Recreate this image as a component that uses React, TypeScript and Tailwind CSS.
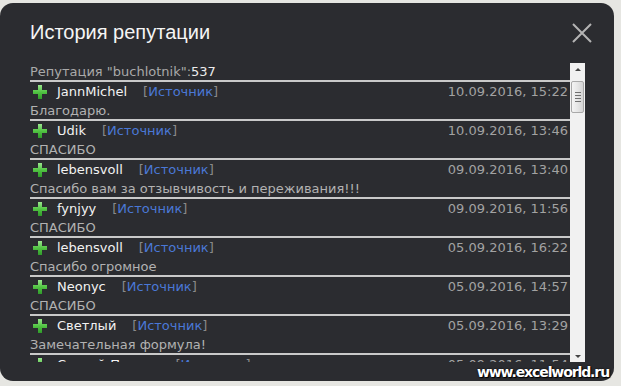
const entries = [
  { user: "JannMichel", date: "10.09.2016, 15:22", text: "Благодарю." },
  { user: "Udik", date: "10.09.2016, 13:46", text: "СПАСИБО" },
  { user: "lebensvoll", date: "09.09.2016, 13:40", text: "Спасибо вам за отзывчивость и переживания!!!" },
  { user: "fynjyy", date: "09.09.2016, 11:56", text: "СПАСИБО" },
  { user: "lebensvoll", date: "05.09.2016, 16:22", text: "Спасибо огромное" },
  { user: "Neonyc", date: "05.09.2016, 14:57", text: "СПАСИБО" },
  { user: "Светлый", date: "05.09.2016, 13:29", text: "Замечательная формула!" },
  { user: "Сергей-Петров", date: "05.09.2016, 11:54", text: "Спасибо" },
];

function PlusIcon() {
  return (
    <svg width="14" height="14" viewBox="0 0 14 14" className="shrink-0">
      <defs>
        <linearGradient id="plusFill" x1="0" y1="0" x2="0" y2="1">
          <stop offset="0" stopColor="#9be58f" />
          <stop offset="0.5" stopColor="#52c443" />
          <stop offset="1" stopColor="#2f9a2a" />
        </linearGradient>
      </defs>
      <path d="M5 0h4v5h5v4H9v5H5V9H0V5h5z" fill="url(#plusFill)" />
    </svg>
  );
}

function Scrollbar() {
  return (
    <div className="flex w-[15px] shrink-0 flex-col items-center bg-[#f1f1f1] pt-[5px]">
      <div className="h-0 w-0 border-x-[3px] border-b-[3px] border-x-transparent border-b-[#444]" />
      <div className="mt-[10px] flex h-[32px] w-[13px] flex-col items-center justify-center gap-[2px] rounded-[2px] border border-[#a9a9a9] bg-gradient-to-r from-[#f4f4f4] via-[#e6e6e6] to-[#d4d4d4]">
        <div className="h-px w-[6px] bg-[#6f6f6f]" />
        <div className="h-px w-[6px] bg-[#6f6f6f]" />
        <div className="h-px w-[6px] bg-[#6f6f6f]" />
        <div className="h-px w-[6px] bg-[#6f6f6f]" />
      </div>
      <div className="flex-1" />
      <div className="mb-[4px] h-0 w-0 border-x-[3px] border-t-[3px] border-x-transparent border-t-[#444]" />
    </div>
  );
}

export default function App() {
  return (
    <div className="h-[386px] w-[621px] overflow-hidden bg-[#e6e6e2] pt-[3px]">
      <div className="relative flex h-[378px] w-[614px] flex-col rounded-[13px] bg-[#2b2c30]">
        <div className="flex h-[60px] shrink-0 items-start justify-between pl-[30px] pr-[22px] pt-[17px]">
          <h1 className="font-['Liberation_Sans',sans-serif] text-[20px] leading-[24px] text-[#f5f5f5]">
            История репутации
          </h1>
          <svg width="20" height="20" viewBox="0 0 20 20" className="mt-[3px]">
            <path d="M1 1L19 19M19 1L1 19" stroke="#b4b4b4" strokeWidth="2" />
          </svg>
        </div>

        <div className="ml-[30px] flex h-[299px] w-[555px] font-['DejaVu_Sans',sans-serif] text-[13px]">
          <div className="flex-1 overflow-hidden">
            <div className="flex h-[17px] items-center leading-none text-[#a9a9a9]">
              Репутация "buchlotnik":<span className="text-[#ececec]">537</span>
            </div>
            {entries.map((e, i) => (
              <div key={i} className="border-t-2 border-[#c9c9c9]">
                <div className="flex h-[19px] items-center pl-[3px] pr-[2px] leading-none">
                  <PlusIcon />
                  <span className="ml-[10px] text-[#f2f2f2]">{e.user}</span>
                  <span className="ml-[16px] text-[#8a8a8a]">
                    [<span className="text-[#4a78d6]">Источник</span>]
                  </span>
                  <span className="ml-auto text-[#a2a2a2]">{e.date}</span>
                </div>
                <div className="flex h-[18px] items-center leading-none text-[#b2b2b2]">{e.text}</div>
              </div>
            ))}
          </div>
          <Scrollbar />
        </div>

        <div className="absolute bottom-[2px] right-[5px] font-['DejaVu_Sans',sans-serif] text-[14px] font-bold leading-none tracking-[-1.1px] text-white [text-shadow:0_0_2px_#000,1px_1px_1px_#000]">
          www.excelworld.ru
        </div>
      </div>
    </div>
  );
}
